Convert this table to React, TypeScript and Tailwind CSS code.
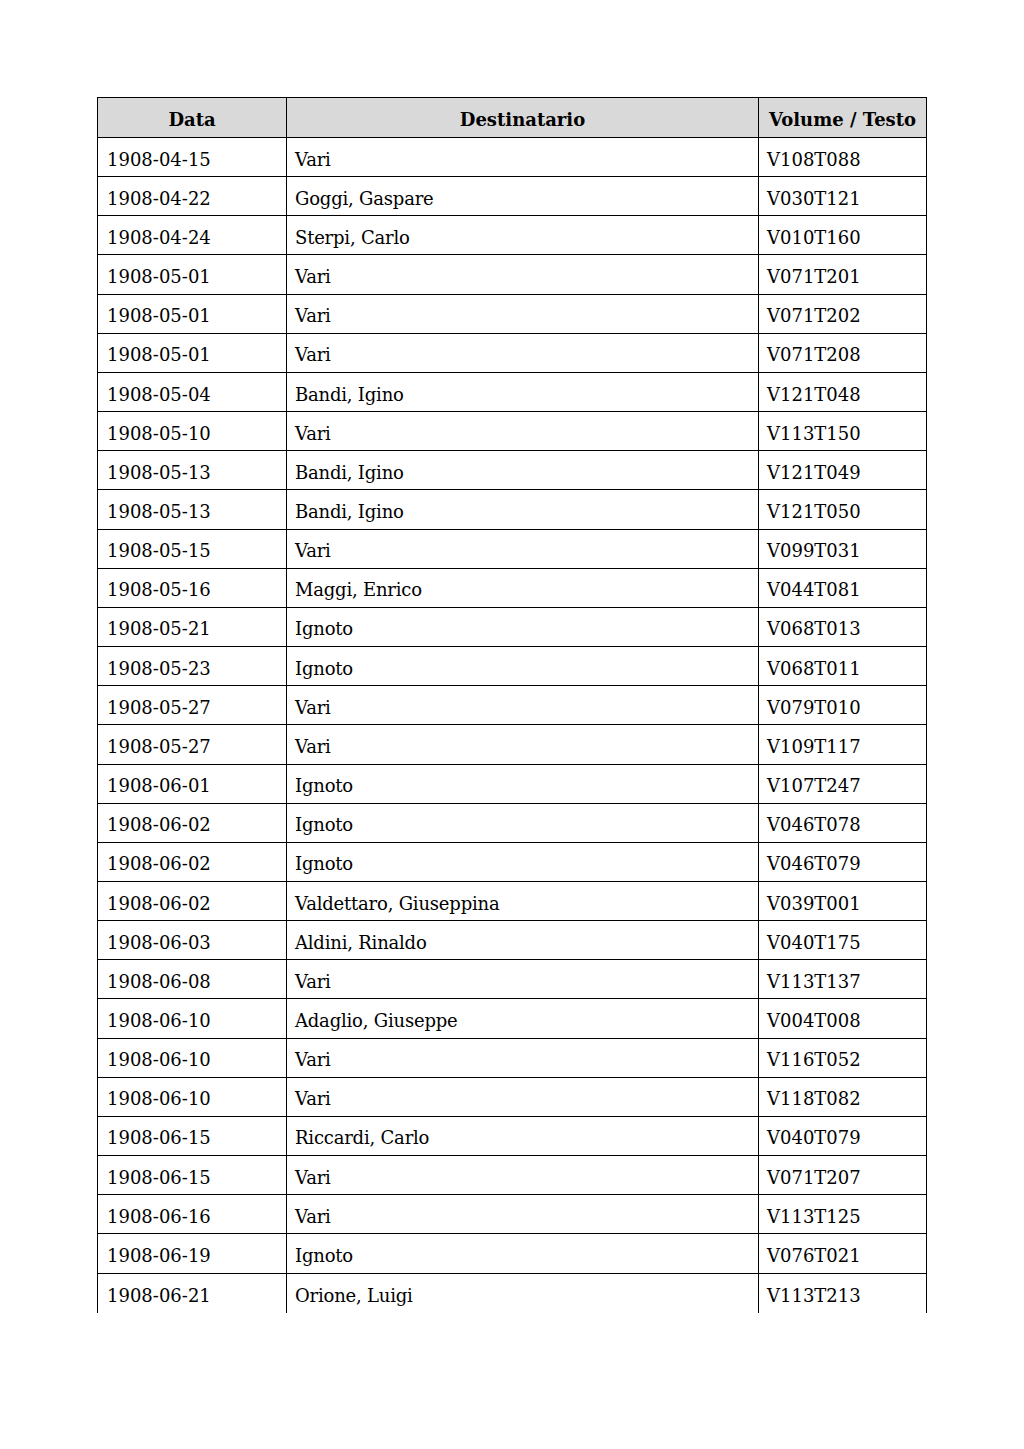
import React from "react";

const rows: [string, string, string][] = [
  ["1908-04-15", "Vari", "V108T088"],
  ["1908-04-22", "Goggi, Gaspare", "V030T121"],
  ["1908-04-24", "Sterpi, Carlo", "V010T160"],
  ["1908-05-01", "Vari", "V071T201"],
  ["1908-05-01", "Vari", "V071T202"],
  ["1908-05-01", "Vari", "V071T208"],
  ["1908-05-04", "Bandi, Igino", "V121T048"],
  ["1908-05-10", "Vari", "V113T150"],
  ["1908-05-13", "Bandi, Igino", "V121T049"],
  ["1908-05-13", "Bandi, Igino", "V121T050"],
  ["1908-05-15", "Vari", "V099T031"],
  ["1908-05-16", "Maggi, Enrico", "V044T081"],
  ["1908-05-21", "Ignoto", "V068T013"],
  ["1908-05-23", "Ignoto", "V068T011"],
  ["1908-05-27", "Vari", "V079T010"],
  ["1908-05-27", "Vari", "V109T117"],
  ["1908-06-01", "Ignoto", "V107T247"],
  ["1908-06-02", "Ignoto", "V046T078"],
  ["1908-06-02", "Ignoto", "V046T079"],
  ["1908-06-02", "Valdettaro, Giuseppina", "V039T001"],
  ["1908-06-03", "Aldini, Rinaldo", "V040T175"],
  ["1908-06-08", "Vari", "V113T137"],
  ["1908-06-10", "Adaglio, Giuseppe", "V004T008"],
  ["1908-06-10", "Vari", "V116T052"],
  ["1908-06-10", "Vari", "V118T082"],
  ["1908-06-15", "Riccardi, Carlo", "V040T079"],
  ["1908-06-15", "Vari", "V071T207"],
  ["1908-06-16", "Vari", "V113T125"],
  ["1908-06-19", "Ignoto", "V076T021"],
  ["1908-06-21", "Orione, Luigi", "V113T213"],
];

export default function App() {
  return (
    <div
      className="w-[1024px] h-[1449px] bg-white text-black pt-[97px] pl-[97px]"
      style={{ fontFamily: '"DejaVu Serif", serif' }}
    >
      <div className="w-[830px] border-l border-t border-black text-[18px] leading-none">
        <div className="flex h-[40px] bg-[#d9d9d9] font-bold border-b border-black">
          <div className="w-[189px] border-r border-black flex items-center justify-center pt-[4px]">Data</div>
          <div className="w-[472px] border-r border-black flex items-center justify-center pt-[4px]">Destinatario</div>
          <div className="w-[168px] border-r border-black flex items-center justify-center pt-[4px]">Volume / Testo</div>
        </div>
        {rows.map((r, i) => (
          <div
            key={i}
            className={
              "flex h-[39.17px] " + (i < rows.length - 1 ? "border-b border-black" : "")
            }
          >
            <div className="w-[189px] border-r border-black flex items-center pl-[9px] pt-[5px]">{r[0]}</div>
            <div className="w-[472px] border-r border-black flex items-center pl-[8px] pt-[5px] tracking-[-0.2px]">{r[1]}</div>
            <div className="w-[168px] border-r border-black flex items-center pl-[8px] pt-[5px]">{r[2]}</div>
          </div>
        ))}
      </div>
    </div>
  );
}
